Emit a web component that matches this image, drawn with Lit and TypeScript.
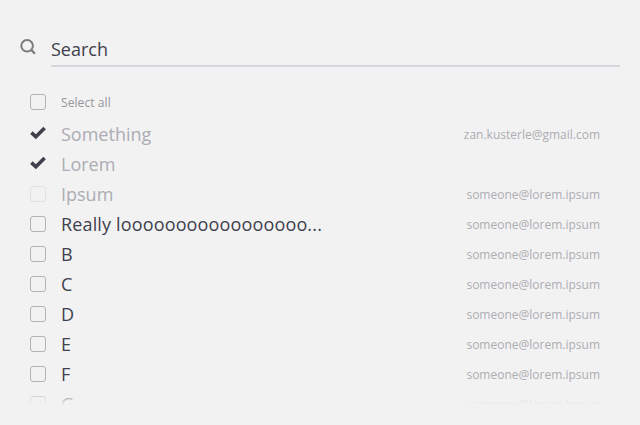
import { LitElement, html, css } from "lit";
import { customElement } from "lit/decorators.js";
import { classMap } from "lit/directives/class-map.js";

interface Item { name: string; email?: string; state?: "checked" | "disabled"; long?: boolean; }

const ITEMS: Item[] = [
  { name: "Something", email: "zan.kusterle@gmail.com", state: "checked" },
  { name: "Lorem", state: "checked" },
  { name: "Ipsum", email: "someone@lorem.ipsum", state: "disabled" },
  { name: "Really looooooooooooooooo...", email: "someone@lorem.ipsum", long: true },
  ...["B", "C", "D", "E", "F", "G"].map((name) => ({ name, email: "someone@lorem.ipsum" })),
];

@customElement("app-root")
export class AppRoot extends LitElement {
  static styles = css`
    :host { display: block; box-sizing: border-box; height: 425px; padding: 33px 20px 0; overflow: hidden;
      background: #f2f2f2; color: #40404d; font-family: "Open Sans", sans-serif; }
    .search { display: flex; height: 34px; box-sizing: border-box; }
    .glass { width: 31px; flex: none; padding-top: 5px; box-sizing: border-box; }
    svg { display: block; }
    .field { flex: 1; border-bottom: 2px solid #d6d6dc; font-size: 18px; line-height: 32px; }
    .all { display: flex; align-items: center; height: 30px; margin: 20px 0 0; padding: 0 20px 0 10px; font-size: 12px; color: #96969c; }
    .label { letter-spacing: 0.08px; }
    .list { position: relative; height: 286px; overflow: hidden; margin-top: 2px; }
    .row { display: flex; align-items: center; height: 30px; padding: 0 20px 0 10px; }
    .box { width: 16px; height: 16px; box-sizing: border-box; border: 1.5px solid #b2b2b7; border-radius: 3px; margin-right: 15px; flex: none; }
    .tick { width: 16px; margin-right: 15px; flex: none; }
    .name { flex: 1; font-size: 18px; line-height: 30px; }
    .long .name { letter-spacing: 0.15px; }
    .email { font-size: 12px; color: #adadb3; margin-top: 1px; }
    .muted .name { color: #acacb2; }
    .disabled .box { border-color: #e1e1e5; }
    .fade { position: absolute; left: 0; right: 0; bottom: 0; height: 20px; background: linear-gradient(rgba(242,242,242,0), #f2f2f2); }
  `;

  row(i: Item) {
    return html`<div class=${classMap({ row: true, muted: !!i.state, disabled: i.state === "disabled", long: !!i.long })}>
      ${i.state === "checked"
        ? html`<svg class="tick" width="16" height="16" viewBox="0 0 16 16"><path d="M1.4 6.6 L5.9 10.8 L14.6 2.1" fill="none" stroke="#40404d" stroke-width="3.6"/></svg>`
        : html`<span class="box"></span>`}
      <span class="name">${i.name}</span><span class="email">${i.email ?? ""}</span>
    </div>`;
  }

  render() {
    return html`
      <div class="search">
        <div class="glass"><svg width="17" height="17" viewBox="0 0 17 17"><circle cx="7.1" cy="7.8" r="5.8" fill="none" stroke="#7b7b80" stroke-width="2"/><path d="M11.2 11.9 L15 15.7" stroke="#7b7b80" stroke-width="2.2"/></svg></div>
        <div class="field">Search</div>
      </div>
      <div class="all"><span class="box"></span><span class="label">Select all</span></div>
      <div class="list">${ITEMS.map((i) => this.row(i))}<div class="fade"></div></div>
    `;
  }
}
